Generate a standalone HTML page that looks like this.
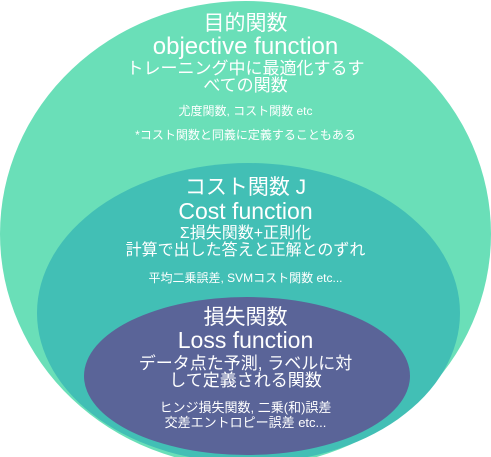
<!DOCTYPE html>
<html><head><meta charset="utf-8"><style>
html,body{margin:0;padding:0;background:#fff;width:491px;height:457px;overflow:hidden;position:relative}
.e{position:absolute;border-radius:50%}
.t{position:absolute;left:0;width:491px;text-align:center;color:#fff;font-family:"Liberation Sans","Noto Sans CJK JP",sans-serif;white-space:nowrap;line-height:1}
</style></head><body>
<div class="e" style="left:0;top:1px;width:491px;height:466px;background:#6ADFB8"></div>
<div class="e" style="left:37px;top:163px;width:423px;height:300px;background:#42BFB5"></div>
<div class="e" style="left:84px;top:297px;width:326px;height:158px;background:#5A6498"></div>
<div class="t" style="top:13px;font-size:21px">目的関数</div>
<div class="t" style="top:35px;font-size:24px">objective function</div>
<div class="t" style="top:60px;font-size:17px">トレーニング中に最適化するす</div>
<div class="t" style="top:77px;font-size:17px">べての関数</div>
<div class="t" style="top:105px;font-size:12px">尤度関数, コスト関数 etc</div>
<div class="t" style="top:129px;font-size:12px">*コスト関数と同義に定義することもある</div>
<div class="t" style="top:177px;font-size:21px">コスト関数 J</div>
<div class="t" style="top:200px;font-size:23px">Cost function</div>
<div class="t" style="top:226px;font-size:16px">Σ損失関数+正則化</div>
<div class="t" style="top:243px;font-size:16px">計算で出した答えと正解とのずれ</div>
<div class="t" style="top:272px;font-size:12px">平均二乗誤差, SVMコスト関数 etc...</div>
<div class="t" style="top:307px;font-size:21px">損失関数</div>
<div class="t" style="top:329px;font-size:23px">Loss function</div>
<div class="t" style="top:355px;font-size:17px">データ点た予測, ラベルに対</div>
<div class="t" style="top:372px;font-size:17px">して定義される関数</div>
<div class="t" style="top:401px;font-size:13px">ヒンジ損失関数, 二乗(和)誤差</div>
<div class="t" style="top:416px;font-size:13px">交差エントロピー誤差 etc...</div>
</body></html>
